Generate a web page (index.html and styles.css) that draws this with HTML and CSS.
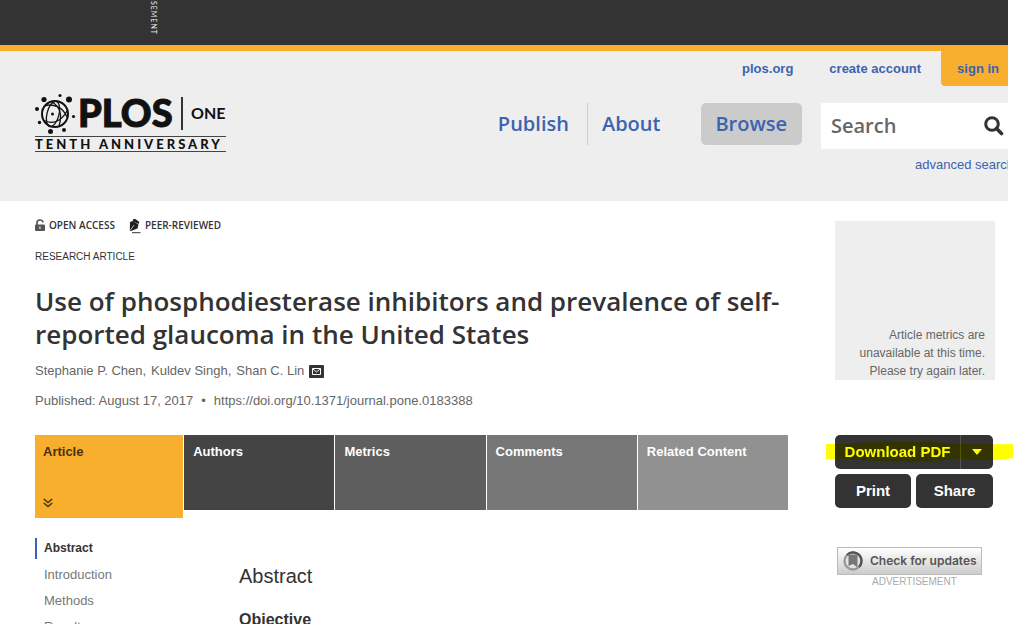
FILE: index.html
```html
<!DOCTYPE html>
<html lang="en">
<head>
<meta charset="utf-8">
<title>Use of phosphodiesterase inhibitors and prevalence of self-reported glaucoma in the United States</title>
<link rel="stylesheet" href="styles.css">
</head>
<body>
<div class="page">
  <div class="ad-bar"><span class="ad-bar-label">ADVERTISEMENT</span></div>
  <header class="header">
    <a class="logo" href="#" aria-label="PLOS ONE Tenth Anniversary">
      <svg width="194" height="60" viewBox="0 0 194 60">
        <g fill="none" stroke="#111" stroke-width="1.3">
          <circle cx="20" cy="21" r="13" stroke-width="2"/>
          <ellipse cx="18" cy="21" rx="6" ry="13" transform="rotate(14 18 21)"/>
          <path d="M9 13C18 10 28 14 32 24M8 27c9 5 18 2 24-9M17 9c7 4 11 11 7 24"/>
        </g>
        <g fill="#111">
          <circle cx="9" cy="6.500" r="2.600"/><circle cx="25" cy="2.500" r="1.600"/><circle cx="34" cy="6.500" r="3"/>
          <circle cx="2" cy="16" r="2"/><circle cx="38.500" cy="23.500" r="1.600"/><circle cx="4.500" cy="29.500" r="1.700"/>
          <circle cx="15.500" cy="38.500" r="2.500"/><circle cx="29" cy="37" r="2"/><circle cx="17.500" cy="21" r="1.500"/>
        </g>
        <text class="logo-plos" x="43" y="34">PLOS</text>
        <path d="M147 4v33" stroke="#333" stroke-width="2"/>
        <text class="logo-one" x="156" y="26">ONE</text>
        <path d="M0 43.500h191M0 58.500h191" stroke="#444"/>
        <text class="logo-tag" x="0" y="56">TENTH ANNIVERSARY</text>
      </svg>
    </a>
    <div class="header-right">
      <nav class="user-nav">
        <a href="#">plos.org</a>
        <a href="#">create account</a>
        <a class="sign-in" href="#">sign in</a>
      </nav>
      <div class="main-row">
        <nav class="main-nav">
          <a href="#">Publish</a>
          <a class="about" href="#">About</a>
          <a class="browse" href="#">Browse</a>
        </nav>
        <form class="search">
          <div class="search-box">
            <input type="text" placeholder="Search" aria-label="Search">
            <button type="button" aria-label="Run search">
              <svg width="20" height="20" viewBox="0 0 20 20"><circle cx="8" cy="8" r="6.300" fill="none" stroke="#333" stroke-width="3"/><path d="M12.500 12.500l5 5" stroke="#333" stroke-width="3.600" stroke-linecap="round"/></svg>
            </button>
          </div>
          <a class="advanced" href="#">advanced search</a>
        </form>
      </div>
    </div>
  </header>
  <main class="main">
    <article class="article">
      <div class="badges">
        <span class="badge"><svg width="10" height="12" viewBox="0 0 10 12"><path d="M2 6V3.500C2 0.300 8 0 8 3.500" fill="none" stroke="#555" stroke-width="1.700"/><rect x="0" y="5.500" width="10" height="6.500" rx="1" fill="#555"/><rect x="4.200" y="7.500" width="1.500" height="2.500" fill="#ccc"/></svg>OPEN ACCESS</span>
        <span class="badge"><svg class="pen" width="12" height="16" viewBox="0 0 12 16"><path d="M4 1.500l2-.8 4.300 3.300-.7 2-6-3z" fill="#222"/><path d="M1 4l3-1 5.500 3.500-1 4L2 13 .8 12.400z" fill="#222"/><path d="M1.500 12l3.500-5" stroke="#ddd" stroke-width=".8"/><path d="M3 14.700h8.500" stroke="#333"/></svg>PEER-REVIEWED</span>
      </div>
      <p class="kind">RESEARCH ARTICLE</p>
      <h1 class="title">Use of phosphodiesterase inhibitors and prevalence of self-reported glaucoma in the United States</h1>
      <p class="authors"><span>Stephanie P. Chen,</span> <span>Kuldev Singh,</span> <span>Shan C. Lin</span><svg width="15" height="13" viewBox="0 0 15 13"><rect width="15" height="13" rx="1" fill="#333"/><path d="M3.500 3.500h8v6h-8zl4 3.500 4-3.500" fill="none" stroke="#fff"/></svg></p>
      <p class="published"><span>Published: August 17, 2017</span><span>•</span><a href="#">https://doi.org/10.1371/journal.pone.0183388</a></p>
      <nav class="tabs">
        <a class="tab tab-article" href="#">Article<svg width="10" height="10" viewBox="0 0 10 10"><path d="M.8 1l4.200 3.500L9.200 1M.8 5l4.200 3.500L9.200 5" fill="none" stroke="#4a3210" stroke-width="1.500"/></svg></a>
        <a class="tab tab-authors" href="#">Authors</a>
        <a class="tab tab-metrics" href="#">Metrics</a>
        <a class="tab tab-comments" href="#">Comments</a>
        <a class="tab tab-related" href="#">Related Content</a>
      </nav>
      <div class="body-row">
        <nav class="contents">
          <a class="current" href="#">Abstract</a>
          <a href="#">Introduction</a>
          <a href="#">Methods</a>
          <a href="#">Results</a>
        </nav>
        <section class="text">
          <h2>Abstract</h2>
          <h3>Objective</h3>
        </section>
      </div>
    </article>
    <aside class="aside">
      <div class="metrics">Article metrics are unavailable at this time. Please try again later.</div>
      <div class="actions">
        <div class="download">
          <button class="btn" type="button">Download PDF</button>
          <button class="btn btn-more" type="button" aria-label="More download options"><svg width="10" height="6" viewBox="0 0 10 6"><path d="M0 0h10L5 6z" fill="#fff"/></svg></button>
          <svg class="marker" viewBox="0 0 187 20" preserveAspectRatio="none"><path d="M0 2H20C55-1 95-1 120 1Q150 3 187 2V16Q172 19 150 18Q135 16 120 18C95 21 55 20 35 18L0 17Z" fill="#ff0"/></svg>
        </div>
        <button class="btn" type="button">Print</button>
        <button class="btn" type="button">Share</button>
      </div>
      <button class="updates" type="button"><svg width="20" height="20" viewBox="0 0 20 20"><circle cx="10" cy="10" r="8.500" fill="#e4e4e4" stroke="#999" stroke-width="2.400"/><path d="M4 4a8.500 8.500 0 0 1 14.500 6A8.500 8.500 0 0 1 16 16" fill="none" stroke="#555" stroke-width="2.400"/><path d="M5.500 3.500h9V16.500L10 13l-4.500 2z" fill="#777"/></svg>Check for updates</button>
      <p class="ad-label">ADVERTISEMENT</p>
    </aside>
  </main>
</div>
</body>
</html>
```
FILE: styles.css
```css
* { box-sizing: border-box; }
html { background: #fff; }
body { margin: 0; font: 13px/18px "Liberation Sans", Arial, sans-serif; color: #333; overflow-x: hidden; }
a { color: inherit; text-decoration: none; }
p, h1, h2, h3 { margin: 0; }
button { font: inherit; border: 0; padding: 0; cursor: pointer; }
svg { display: block; flex: none; }

.ad-bar { height: 51px; margin-right: 5px; padding: 0 0 10px 149px; display: flex; align-items: flex-end; overflow: hidden; background: #333; border-bottom: 6px solid #f8af2d; }
.ad-bar-label { writing-mode: vertical-rl; font: 7px/9px Lato, sans-serif; letter-spacing: 1px; color: #eee; }

.header { display: flex; justify-content: space-between; height: 150px; margin-right: 5px; padding-left: 35px; background: #eee; overflow: hidden; color: #3c63af; }
.logo { margin-top: 42px; }
.logo svg { overflow: visible; }
.logo-plos { font: 900 38px/44px Lato, sans-serif; fill: #111; stroke: #111; stroke-width: 1px; }
.logo-one { font: 700 16px/20px Lato, sans-serif; fill: #111; }
.logo-tag { font: 900 13px/16px Lato, sans-serif; letter-spacing: 3px; fill: #111; }
.user-nav { display: flex; justify-content: flex-end; font-weight: 700; line-height: 35px; gap: 36px; }
.sign-in { background: #f8af2d; border-radius: 0 0 0 4px; padding: 0 9px 0 16px; margin-left: -16px; }
.main-row { display: flex; margin-top: 17px; }
.main-nav { display: flex; align-items: flex-start; margin-right: 19px; font: 600 20px/42px "Open Sans", sans-serif; }
.main-nav a { padding-right: 18px; }
.main-nav .about { border-left: 1px solid #ccc; padding: 0 41px 0 14px; }
.main-nav .browse { background: #cbcbcb; border-radius: 5px; padding: 0 15px 0 14px; }
.search { width: 187px; }
.search-box { display: flex; align-items: center; height: 46px; background: #fff; padding: 0 4px 0 10px; }
.search-box input { flex: 1; min-width: 0; border: 0; padding: 0; outline: 0; background: none; font: 600 20px/28px "Open Sans", sans-serif; color: #666; }
.search-box input::placeholder { color: #666; opacity: 1; }
.search-box button { background: none; }
.advanced { display: block; margin: 7px 0 0 94px; white-space: nowrap; }

.main { display: flex; gap: 47px; margin-right: 5px; padding: 0 13px 0 35px; }
.article { flex: 1; min-width: 0; }
.badges { display: flex; gap: 14px; margin-top: 14px; font: 600 10px/20px "Open Sans", sans-serif; }
.badge { display: flex; align-items: center; gap: 4px; }
.badge .pen { margin-top: 2px; }
.kind { margin-top: 13px; font-size: 10px; }
.title { margin-top: 19px; font: 600 26px/33px "Open Sans", sans-serif; }
.authors { display: flex; align-items: center; gap: 5px; margin-top: 11px; color: #666; }
.published { display: flex; gap: 8px; margin-top: 12px; color: #666; }
.tabs { display: flex; align-items: flex-start; gap: 1px; margin-top: 25px; }
.tab { flex: 1; height: 75px; padding: 8px 9px; color: #fff; font-weight: 700; }
.tab-article { display: flex; flex-direction: column; justify-content: space-between; height: 83px; padding: 8px 8px 10px; background: #f8af2d; color: #4a3210; }
.tab-authors { background: #444; }
.tab-metrics { background: #5e5e5e; }
.tab-comments { background: #777; }
.tab-related { background: #919191; }
.body-row { display: flex; margin-top: 20px; }
.contents { display: flex; flex-direction: column; gap: 5px; width: 204px; color: #777; }
.contents a { padding-left: 7px; border-left: 2px solid transparent; line-height: 21px; }
.contents .current { font-size: 12px; font-weight: 700; color: #333; border-color: #3c63af; }
.text h2 { margin-top: 26px; font-size: 20px; line-height: 24px; font-weight: 400; }
.text h3 { margin-top: 22px; font-size: 16px; line-height: 20px; }

.aside { width: 160px; padding-top: 20px; }
.metrics { display: flex; align-items: flex-end; height: 159px; padding: 0 10px 0 20px; background: #eee; color: #666; font-size: 12px; text-align: right; }
.actions { display: grid; grid-template-columns: 76px 77px; gap: 5px; margin-top: 55px; }
.btn { height: 34px; background: #333; color: #fff; border-radius: 5px; font-weight: 700; font-size: 15px; }
.download { position: relative; isolation: isolate; grid-column: 1 / 3; display: flex; background: #fff; }
.download .btn { flex: 1; border-radius: 5px 0 0 5px; }
.download .btn-more { flex: 0 0 33px; border-left: 1px solid #555; border-radius: 0 5px 5px 0; display: grid; place-items: center; }
.marker { position: absolute; left: -9px; top: 7px; width: 187px; height: 20px; mix-blend-mode: multiply; pointer-events: none; }
.updates { display: flex; align-items: center; gap: 7px; width: 145px; height: 28px; margin: 39px 0 0 2px; padding: 0 5px; border: 1px solid #bbb; background: linear-gradient(#fff, #ccc); color: #555; font: 600 12px/18px Inter, sans-serif; white-space: nowrap; }
.ad-label { margin: -2px 0 0 37px; font-size: 10px; color: #aaa; }
```
